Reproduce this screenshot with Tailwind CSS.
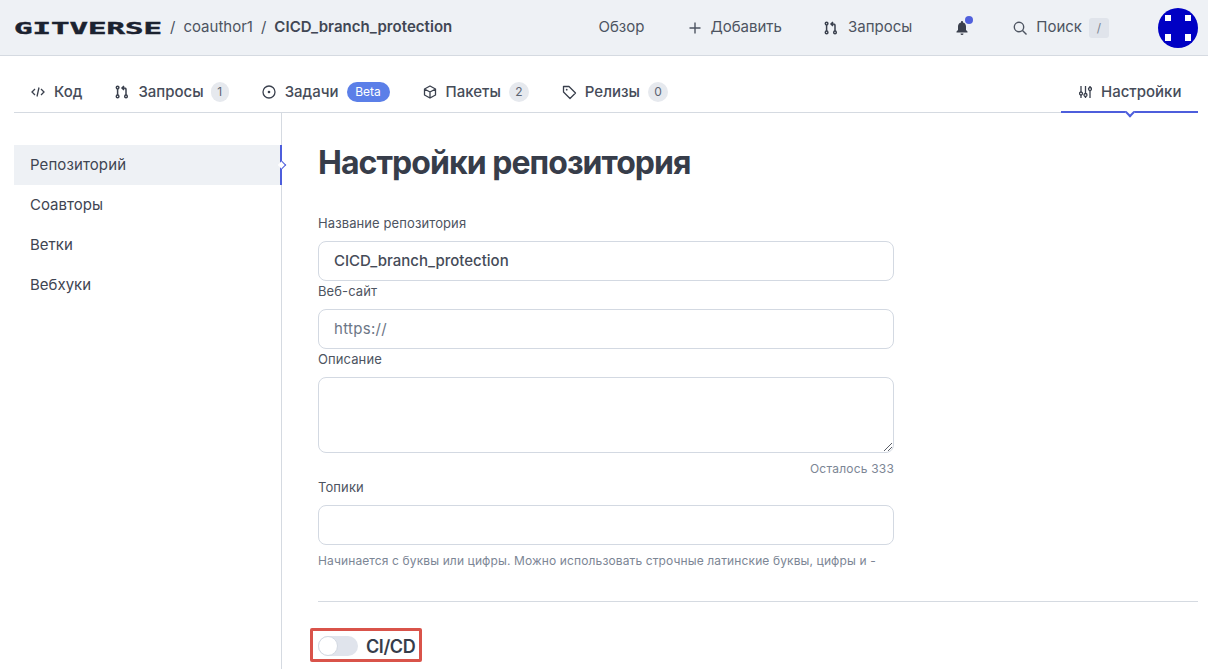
<!doctype html>
<html lang="ru">
<head>
<meta charset="utf-8">
<script src="https://cdn.jsdelivr.net/npm/@tailwindcss/browser@4"></script>
</head>
<body class="bg-white font-['Inter',sans-serif] text-[#3a404d] overflow-hidden h-[669px]">
<header class="h-[56px] bg-[#eef1f5] border-b border-[#d5dae1] flex items-center pl-[14px] pr-[10px]">
  <div class="w-[148px] overflow-visible shrink-0"><span class="inline-block origin-left scale-x-[2.05] font-['DejaVu_Sans_Mono',monospace] font-bold text-[15px] leading-none text-[#1b2230] [-webkit-text-stroke:0.4px_#1b2230]">GITVERSE</span></div>
  <span class="ml-[8px] text-[15px] text-[#4a5160]">/</span>
  <span class="ml-[8px] text-[15px] text-[#4d5461]">coauthor1</span>
  <span class="ml-[8px] text-[15px] text-[#4a5160]">/</span>
  <span class="ml-[8px] text-[15px] font-semibold tracking-[0.05px] text-[#414754]">CICD_branch_protection</span>
  <nav class="ml-auto flex items-center text-[15px] text-[#4d5461]">
    <span>Обзор</span>
    <span class="ml-[44px] flex items-center gap-[8px]"><svg class="w-[14px] h-[14px]" viewBox="0 0 14 14" fill="none" stroke="#4d5461" stroke-width="1.4"><path d="M7 1.5v11M1.5 7h11"/></svg>Добавить</span>
    <span class="ml-[42px] flex items-center gap-[10px]"><svg class="w-[14px] h-[14px]" viewBox="0 0 14 14" fill="none" stroke="#3a404d" stroke-width="1.5"><circle cx="2.6" cy="2.6" r="1.3"/><circle cx="2.6" cy="11.4" r="1.3"/><circle cx="11" cy="11.4" r="1.3"/><path d="M2.6 4v6M11 10V4.5C11 3.4 10.2 3 9 3H7.5M9 1 7 3l2 2"/></svg>Запросы</span>
    <span class="ml-[43px] relative w-[14px] h-[16px]"><svg class="w-[14px] h-[16px]" viewBox="0 0 14 16" fill="#3a404d"><path d="M7 1c-.6 0-1 .4-1 1v.5C3.9 3 3 4.700 3 6.500V10l-1.500 1.500V12.500h11V11.500L11 10V6.500C11 4.700 10.100 3 8 2.500V2c0-.6-.4-1-1-1zM5.500 13.500a1.500 1.500 0 0 0 3 0z"/></svg><span class="absolute -top-[4px] -right-[4px] w-[8px] h-[8px] rounded-full bg-[#5060dc]"></span></span>
    <span class="ml-[44px] flex items-center gap-[9px]"><svg class="w-[14px] h-[14px]" viewBox="0 0 14 14" fill="none" stroke="#4d5461" stroke-width="1.4"><circle cx="6" cy="6" r="4.700"/><path d="m9.500 9.500 4 4"/></svg>Поиск</span>
    <span class="ml-[7px] w-[20px] h-[20px] rounded-[3px] bg-[#e0e4eb] flex items-center justify-center text-[12px] text-[#7a8391]">/</span>
    <svg class="ml-[49px] w-[40px] h-[40px]" viewBox="0 0 40 40"><circle cx="20" cy="20" r="20" fill="#0000c4"/><path fill="#fff" d="M7 7h6v6H7zM27 7h6v6h-6zM7 26h6v7H7zM27 26h6v7h-6z"/></svg>
  </nav>
</header>

<div class="ml-[14px] mr-[10px] h-[57px] pt-[16px] border-b border-[#d5dae1] flex items-center text-[15px] font-medium text-[#464c59] relative">
  <span class="ml-[17px] flex items-center gap-[9px]"><svg class="w-[14px] h-[14px]" viewBox="0 0 14 14" fill="none" stroke="#3a404d" stroke-width="1.300"><path d="M4 4 1 7l3 3M10 4l3 3-3 3M8 2.500 6 11.500"/></svg>Код</span>
  <span class="ml-[33px] flex items-center gap-[9px]"><svg class="w-[14px] h-[14px]" viewBox="0 0 14 14" fill="none" stroke="#3a404d" stroke-width="1.500"><circle cx="2.600" cy="2.600" r="1.300"/><circle cx="2.600" cy="11.400" r="1.300"/><circle cx="11" cy="11.400" r="1.300"/><path d="M2.600 4v6M11 10V4.500C11 3.400 10.200 3 9 3H7.500M9 1 7 3l2 2"/></svg>Запросы</span>
  <span class="ml-[7px] w-[18px] h-[20px] rounded-full bg-[#e6e9ee] flex items-center justify-center text-[12px] font-normal text-[#5c6472]">1</span>
  <span class="ml-[33px] flex items-center gap-[9px]"><svg class="w-[14px] h-[14px]" viewBox="0 0 14 14" fill="none" stroke="#3a404d" stroke-width="1.300"><circle cx="7" cy="7" r="6"/><circle cx="7" cy="7" r="1.300" fill="#3a404d" stroke="none"/></svg>Задачи</span>
  <span class="ml-[8px] w-[43px] h-[20px] rounded-full bg-[#5b7fe8] flex items-center justify-center text-[12px] font-normal text-white">Beta</span>
  <span class="ml-[33px] flex items-center gap-[9px]"><svg class="w-[14px] h-[14px]" viewBox="0 0 14 14" fill="none" stroke="#3a404d" stroke-width="1.300" stroke-linejoin="round"><path d="M7 1 12.500 4v6L7 13 1.500 10V4zM1.500 4 7 7l5.500-3M7 7v6"/></svg>Пакеты</span>
  <span class="ml-[8px] w-[20px] h-[20px] rounded-full bg-[#e6e9ee] flex items-center justify-center text-[12px] font-normal text-[#5c6472]">2</span>
  <span class="ml-[33px] flex items-center gap-[8px]"><svg class="w-[15px] h-[15px]" viewBox="0 0 15 15" fill="none" stroke="#3a404d" stroke-width="1.300" stroke-linejoin="round"><path d="M1.500 1.500h5.500l6.500 6.500-5.500 5.500L1.500 7z"/><circle cx="4.700" cy="4.700" r=".9" fill="#3a404d" stroke="none"/></svg>Релизы</span>
  <span class="ml-[8px] w-[20px] h-[20px] rounded-full bg-[#e6e9ee] flex items-center justify-center text-[12px] font-normal text-[#5c6472]">0</span>
  <span class="ml-auto w-[137px] h-[42px] pt-[2px] -mb-px self-end border-b-2 border-[#4d5edc] relative flex items-center pl-[18px] gap-[9px] font-medium"><svg class="w-[13px] h-[14px]" viewBox="0 0 13 14" fill="none" stroke="#3a404d" stroke-width="1.300"><path d="M2 1v12M6.500 1v12M11 1v12"/><circle cx="2" cy="8.500" r="1.500" fill="#fff"/><circle cx="6.500" cy="10" r="1.500" fill="#fff"/><circle cx="11" cy="4" r="1.500" fill="#fff"/></svg>Настройки<span class="absolute left-1/2 -translate-x-1/2 -bottom-[5px] w-[7px] h-[7px] rotate-45 bg-white border-r-2 border-b-2 border-[#4d5edc]"></span></span>
</div>

<div class="flex pl-[14px] pr-[10px] h-[556px]">
  <aside class="w-[268px] shrink-0 border-r border-[#d5dae1] pt-[32px] h-full text-[15px] font-normal text-[#3f4552]">
    <div class="relative h-[40px] bg-[#eef1f5] flex items-center pl-[16px] tracking-[0.1px]">Репозиторий<span class="absolute -right-px top-0 bottom-0 w-[2px] bg-[#4d5edc]"></span><span class="absolute -right-[4px] top-1/2 -translate-y-1/2 w-[6px] h-[6px] rotate-45 bg-white border-t-[1.500px] border-r-[1.500px] border-[#4d5edc]"></span></div>
    <div class="h-[40px] flex items-center pl-[16px]">Соавторы</div>
    <div class="h-[40px] flex items-center pl-[16px]">Ветки</div>
    <div class="h-[40px] flex items-center pl-[16px]">Вебхуки</div>
  </aside>
  <main class="flex-1 pl-[36px]">
    <h1 class="mt-[31px] h-[38px] flex items-center text-[32px] font-bold tracking-[-0.95px] text-[#373d4a]">Настройки репозитория</h1>
    <div class="w-[576px] mt-[31px] text-[13px] text-[#4d5461]">
      <label class="block h-[20px] leading-[20px] tracking-[0.1px]">Название репозитория</label>
      <div class="mt-[8px] h-[40px] rounded-[8px] border border-[#d3d9e2] flex items-center px-[15px] text-[15px] font-medium text-[#454b58]">CICD_branch_protection</div>
      <label class="block h-[20px] leading-[20px] tracking-[0.1px]">Веб-сайт</label>
      <div class="mt-[8px] h-[40px] rounded-[8px] border border-[#d3d9e2] flex items-center px-[15px] text-[15px] tracking-[0.3px] text-[#6c7686]">https://</div>
      <label class="block h-[20px] leading-[20px] tracking-[0.1px]">Описание</label>
      <div class="relative mt-[8px] h-[76px] rounded-[8px] border border-[#d3d9e2]"><svg class="absolute right-[1px] bottom-[1px] w-[8px] h-[8px]" viewBox="0 0 8 8" stroke="#5a5f68" stroke-width="1"><path d="M0 8 8 0M4 8l4-4"/></svg></div>
      <div class="mt-[6px] h-[18px] text-right text-[12px] leading-[20px] tracking-[0.2px] text-[#7c8695]">Осталось 333</div>
      <label class="block h-[20px] leading-[20px] tracking-[0.1px]">Топики</label>
      <div class="mt-[8px] h-[40px] rounded-[8px] border border-[#d3d9e2]"></div>
      <p class="mt-[6px] h-[20px] leading-[20px] whitespace-nowrap text-[12px] tracking-[0.12px] text-[#7c8695]">Начинается с буквы или цифры. Можно использовать строчные латинские буквы, цифры и -</p>
    </div>
    <div class="mt-[30px] border-t border-[#d5dae1]"></div>
    <div class="relative mt-[34px] flex items-center h-[20px]">
      <span class="absolute -left-[8px] -top-[8px] w-[112px] h-[34px] border-[3px] border-[#d9534a] rounded-[2px]"></span>
      <span class="w-[40px] h-[20px] rounded-full bg-[#e0e4ec] relative"><span class="absolute left-0 top-0 w-[20px] h-[20px] rounded-full bg-white border border-[#d3d9e2]"></span></span>
      <span class="ml-[8px] text-[18px] font-semibold tracking-[-0.4px] text-[#373d4a]">CI/CD</span>
    </div>
  </main>
</div>
</body>
</html>
